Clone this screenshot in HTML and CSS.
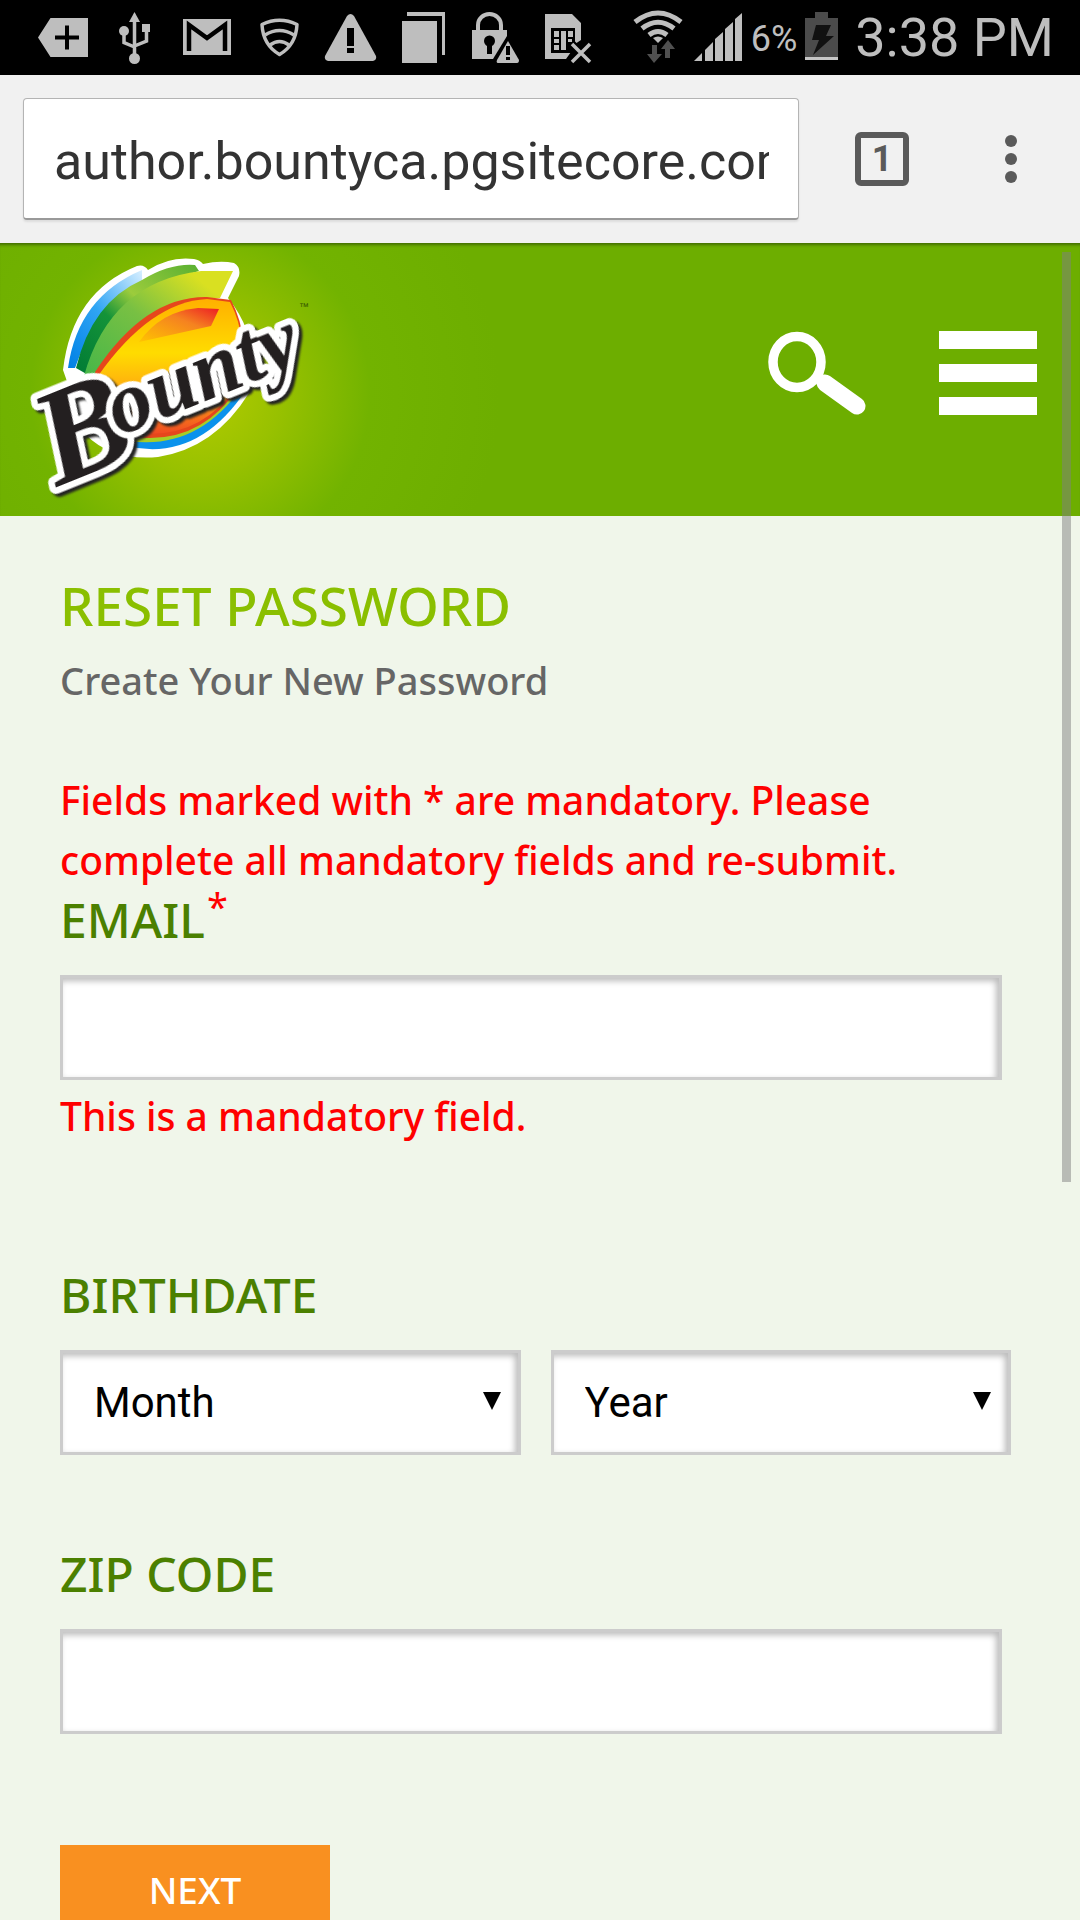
FILE: index.html
```html
<!DOCTYPE html>
<html lang="en">
<head>
<meta charset="utf-8">
<meta name="viewport" content="width=device-width, initial-scale=1">
<title>Reset Password</title>
<link rel="stylesheet" href="styles.css">
</head>
<body>
<div class="status">
  <svg width="600" height="75" viewBox="0 0 600 75" fill="#bebebe" aria-hidden="true">
    <path fill-rule="evenodd" d="M38 37.500 50.500 18H88V57H50.500ZM65 25.500V35.500H55V39.500H65V49.500H69V39.500H79V35.500H69V25.500Z"/>
    <path d="M134.500 20V58M124 31V42.500L134.500 47M146.500 30V41L134.500 46" stroke="#bebebe" stroke-width="3.500" fill="none"/>
    <path d="M134.500 12 140 22H129Z"/><circle cx="124" cy="31" r="5"/><path d="M142 24h8v8h-8z"/><circle cx="134.500" cy="58.500" r="5.500"/>
    <path d="M183 19h48v36h-48z"/><path d="M189 51V25L207 38 225 25V51" fill="none" stroke="#000" stroke-width="4.500"/>
    <g fill="none" stroke="#bebebe" stroke-width="3.500" stroke-linejoin="round"><path d="M262 24.500Q279.500 16 297 24.500Q296 45 279.500 54.500Q263 45 262 24.500Z"/><path d="M265 35Q279.500 26 294 35M270 45Q279.500 38 289 45"/></g>
    <path d="M347 16q3.500-4 7 0L376 56q1 4-3 5H328q-4-1-3-5Z"/><path fill="#000" d="M347 28h7v18h-7zM347 48h7v5h-7z"/>
    <path d="M402 21h35v42h-35zM407 12h38v43h-3V16h-35z"/>
    <path d="M478 31V25a11.500 11 0 0 1 23 0V31" fill="none" stroke="#bebebe" stroke-width="4"/>
    <path d="M472 30h35v6L493 59H472z"/><circle cx="489.500" cy="41" r="5.500" fill="#000"/><path fill="#000" d="M487 43h5v11h-5z"/>
    <path d="M508 41 519 60q0 3-2 3H498q-2 0-1-3Z"/><path fill="#000" d="M506 46h4v9h-4zM506 57h4v3h-4z"/>
    <path d="M545 14h27l9 9V40l-6 4-4 8-5 7h-21z"/><path fill="#000" d="M551 28h24v25h-24z"/>
    <path d="M554 31h5v6h-5zM554 39h5v4h-5zM554 45h5v5h-5zM561 31h5v19h-5zM568 31h5v6h-5zM568 39h4v3h-4z"/>
    <path d="m571 43 19 19m0-19-19 19" fill="none" stroke="#000" stroke-width="8"/>
    <path d="m572 44 18 18m0-18-18 18" fill="none" stroke="#bebebe" stroke-width="3.500"/>
  </svg>
  <div class="system">
    <svg width="118" height="75" viewBox="624 0 118 75" fill="#bebebe" aria-hidden="true">
      <g fill="none" stroke="#bebebe" stroke-width="5"><path d="M634 22Q657 4 680 22M641 28.500Q657 16 673 28.500M648 35Q657 28 666 35"/></g>
      <path d="M652 38q5-3 10 0l-5 5z"/>
      <path fill="#505050" d="M651 45h5v9h5l-8 9-7-9h5zM667 40l7 9h-5v9h-5v-9h-4z"/>
      <path d="M693 61l8-8v8zM704 50l8-8v19h-8zM714 39l8-7v29h-8zM724 29l8-7v39h-8zM734 19l7-6v48h-7z"/>
    </svg>
    <span class="charge">6%</span>
    <svg class="battery" width="33" height="75" viewBox="805 0 33 75" aria-hidden="true">
      <path fill="#4b4b4b" d="M815 12h13v6h10v39h-33V18h10z"/><path fill="#c6c6c6" d="M805 57h33v3h-33z"/><path fill="#111" d="M816 25h15l-5 11h8l-21 19 6-15h-7z"/>
    </svg>
    <time class="clock">3:38 PM</time>
  </div>
</div>
<div class="toolbar">
  <input class="address" type="text" aria-label="Address" value="author.bountyca.pgsitecore.com">
  <button class="tabs" type="button" aria-label="Open tabs"><span>1</span></button>
  <button class="more" type="button" aria-label="More options">
    <svg width="12" height="48" viewBox="0 0 12 48" fill="#5a5a5a" aria-hidden="true"><circle cx="6" cy="6" r="6"/><circle cx="6" cy="24" r="6"/><circle cx="6" cy="42" r="6"/></svg>
  </button>
</div>
<div class="page">
  <header class="site-header">
    <a class="brand" href="#" aria-label="Bounty">
      <svg width="340" height="273" viewBox="0 243 340 273" aria-hidden="true">
        <defs>
          <linearGradient id="green" x1="0" y1="1" x2="1" y2="0"><stop offset="0" stop-color="#3fb549"/><stop offset=".5" stop-color="#78c043"/><stop offset=".85" stop-color="#d9e021"/></linearGradient>
          <linearGradient id="dark" x1="0" y1="1" x2="1" y2="0"><stop offset="0" stop-color="#007a35"/><stop offset=".4" stop-color="#149339"/><stop offset=".6" stop-color="#9ccc3c"/><stop offset="1" stop-color="#59b031"/></linearGradient>
          <linearGradient id="blue" x1="0" y1="1" x2="1" y2="0"><stop offset="0" stop-color="#0080e5"/><stop offset=".5" stop-color="#30a5f4"/><stop offset="1" stop-color="#d8efff"/></linearGradient>
          <linearGradient id="sun" x1="0" y1="0" x2="0" y2="1"><stop offset="0" stop-color="#ffb000"/><stop offset=".4" stop-color="#ffdc00"/><stop offset=".75" stop-color="#ff9d14"/><stop offset="1" stop-color="#ef4a22"/></linearGradient>
          <linearGradient id="flare" x1="0" y1="1" x2="1" y2="0"><stop offset="0" stop-color="#ffc400"/><stop offset=".6" stop-color="#f58220"/><stop offset="1" stop-color="#ed1c24"/></linearGradient>
        </defs>
        <path fill="#fff" d="M63 370Q72 292 137 266Q144 264 148 270Q170 256 194 259Q200 260 203 264Q220 260 234 263Q241 267 239 276L228 298Q262 340 249 393Q215 448 158 457Q112 461 86 435Z"/>
        <path fill="url(#blue)" d="M68 368Q78 297 142 270V286Q94 311 75 368Z"/>
        <path fill="url(#dark)" d="M76 368Q92 302 142 280Q170 263 195 265L199 271Q125 292 90 376Z"/>
        <path fill="url(#green)" d="M84 376Q110 282 201 271L233 271L220 298Q148 300 103 364L90 390Z"/>
        <path fill="#0a92ec" d="M98 436Q188 477 246 390L230 380L110 425Z"/>
        <path fill="#a6ce27" d="M106 436Q190 461 242 387L230 376L110 420Z"/>
        <path fill="#e6461c" d="M95 372Q145 296 207 297L231 300Q252 340 238 388Q195 452 118 434Z"/>
        <path fill="url(#sun)" d="M98 376Q150 302 207 299L230 302Q250 340 237 386Q195 447 120 430Z"/>
        <path fill="url(#flare)" d="M139 342Q161 311 198 308L219 309 211 326Z"/>
        <text class="wordmark" transform="translate(57 487) rotate(-22)"><tspan class="initial">B</tspan><tspan dx="-14" dy="-24">ounty</tspan></text>
        <text class="mark" x="299" y="310">™</text>
      </svg>
    </a>
    <nav class="site-nav" aria-label="Site">
      <button type="button" aria-label="Search">
        <svg width="98" height="84" viewBox="0 0 98 84" aria-hidden="true"><ellipse cx="29" cy="31" rx="24" ry="25.500" fill="none" stroke="#fff" stroke-width="9.500"/><path d="M57 52 89 75" stroke="#fff" stroke-width="17" stroke-linecap="round" fill="none"/></svg>
      </button>
      <button type="button" aria-label="Menu">
        <svg width="98" height="84" viewBox="0 0 98 84" fill="#fff" aria-hidden="true"><path d="M0 0h98v18H0zM0 33h98v18H0zM0 66h98v18H0z"/></svg>
      </button>
    </nav>
  </header>
  <main>
    <h1>RESET PASSWORD</h1>
    <p class="intro">Create Your New Password</p>
    <form>
      <p class="error">Fields marked with * are mandatory. Please complete all mandatory fields and re-submit.</p>
      <div class="field email">
        <label for="email">EMAIL<sup>*</sup></label>
        <input class="box" id="email" type="email">
        <p class="error">This is a mandatory field.</p>
      </div>
      <div class="field birth">
        <label for="month">BIRTHDATE</label>
        <div class="pair">
          <div class="pick"><select class="box" id="month"><option>Month</option></select><svg width="18" height="18" viewBox="0 0 18 18" aria-hidden="true"><path d="M0 0h18L9 18z"/></svg></div>
          <div class="pick"><select class="box" aria-label="Birth year"><option>Year</option></select><svg width="18" height="18" viewBox="0 0 18 18" aria-hidden="true"><path d="M0 0h18L9 18z"/></svg></div>
        </div>
      </div>
      <div class="field zip">
        <label for="zip">ZIP CODE</label>
        <input class="box" id="zip" type="text">
      </div>
      <button class="next" type="submit">NEXT</button>
    </form>
  </main>
  <div class="scroll-thumb"></div>
</div>
</body>
</html>
```
FILE: styles.css
```css
* { box-sizing: border-box; }

body {
  margin: 0;
  height: 100vh;
  display: flex;
  flex-direction: column;
  overflow: hidden;
  background: #f0f6ea;
  font-family: "Noto Sans", sans-serif;
  font-weight: 500;
}

svg { display: block; flex: none; }
p, h1 { margin: 0; }
button { border: 0; padding: 0; background: none; cursor: pointer; }

/* Phone status bar */
.status {
  flex: none;
  display: flex;
  justify-content: space-between;
  background: #000;
  color: #bebebe;
  font-family: Roboto, sans-serif;
  font-weight: 400;
  white-space: nowrap;
}
.system { display: flex; align-items: center; padding-right: 26px; }
.charge { margin-left: 8px; padding-top: 4px; font-size: 36px; line-height: 71px; }
.battery { margin: 0 17px 0 8px; }
.clock { font-size: 54px; line-height: 75px; }

/* Browser toolbar */
.toolbar {
  flex: none;
  display: flex;
  align-items: center;
  height: 168px;
  padding: 0 63px 0 23px;
  background: #f1f1f1;
}
.address {
  flex: 1;
  min-width: 0;
  height: 122px;
  padding: 5px 29px 0 30px;
  border: 1px solid #b4b4b4;
  border-bottom: 2px solid #999;
  border-radius: 4px;
  background: #fff;
  box-shadow: 0 2px 2px #ddd;
  color: #333;
  font: 400 52px Roboto, sans-serif;
}
.tabs {
  width: 54px;
  height: 54px;
  margin: 0 96px 0 56px;
  border: 6px solid #5a5a5a;
  border-radius: 6px;
  color: #5a5a5a;
  font: 700 36px/42px Roboto, sans-serif;
}

/* Site header */
.page { position: relative; flex: 1; min-height: 0; }
.site-header {
  display: flex;
  justify-content: space-between;
  align-items: center;
  padding-right: 43px;
  background: radial-gradient(circle at 200px 150px, #b4cc00 0, #98c100 80px, #72b300 170px, #6dae00 300px);
  box-shadow: inset 0 4px 3px -2px #447000;
}
.site-nav { display: flex; gap: 73px; padding-bottom: 14px; }
.wordmark {
  font: italic 700 86px "Liberation Serif", serif;
  fill: #231f20;
  stroke: #fff;
  stroke-width: 13px;
  stroke-linejoin: round;
  paint-order: stroke;
  filter: drop-shadow(2px 4px 1px #222);
}
.initial { font-size: 136px; }
.mark { font: 10px "Liberation Sans", sans-serif; fill: #335500; }

/* Form */
main { padding: 60px; }
h1 { color: #8abf00; font-size: 53px; font-weight: 500; line-height: 60px; }
.intro { margin-top: 14px; color: #666; font-size: 38px; line-height: 60px; }
.error { color: #f00; font-size: 39px; line-height: 60px; }
form > .error { margin-top: 60px; }
.field label { display: block; color: #4b8000; font-size: 48px; line-height: 60px; margin-bottom: 25px; }
.field sup { margin-left: 2px; color: #f00; font-size: 38px; font-weight: 400; line-height: 0; }
.box {
  display: block;
  width: 100%;
  height: 105px;
  padding: 0 31px;
  border: 3px solid #ccc;
  border-radius: 0;
  background: #fff;
  box-shadow: inset -3px 3px 6px #bbb;
  color: #000;
  font: 400 42px Roboto, sans-serif;
}
input.box { width: calc(100% - 18px); }
.field .error { margin-top: 6px; }
.birth { margin-top: 119px; }
.pair { display: grid; grid-template-columns: 1fr 1fr; gap: 30px; margin-right: 9px; }
.pick { position: relative; }
select.box { appearance: none; }
.pick svg { position: absolute; right: 20px; top: 42px; pointer-events: none; }
.zip { margin-top: 89px; }
.next {
  display: block;
  width: 270px;
  height: 90px;
  margin-top: 111px;
  background: #f99020;
  color: #fff;
  font: 500 37px/60px "Noto Sans", sans-serif;
}

.scroll-thumb {
  position: absolute;
  top: 9px;
  right: 9px;
  width: 9px;
  height: 930px;
  background: rgba(128, 128, 128, .5);
}
```
